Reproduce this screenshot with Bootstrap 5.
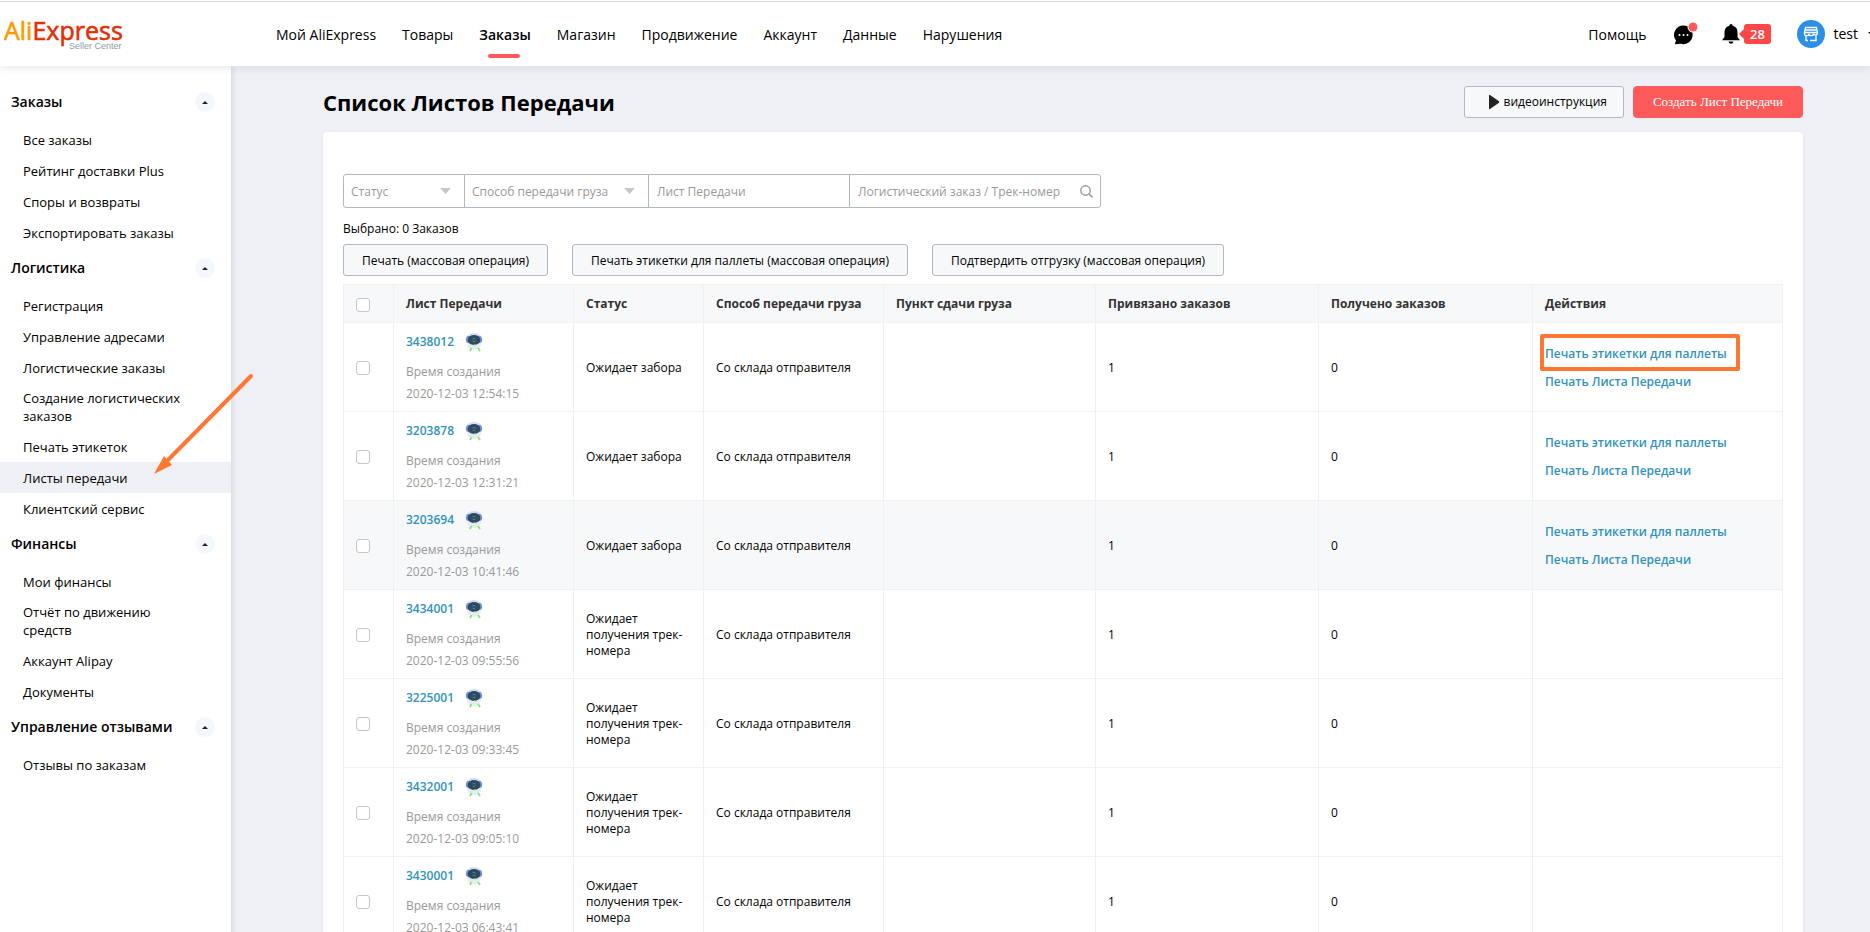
<!DOCTYPE html>
<html lang="ru">
<head>
<meta charset="utf-8">
<meta name="viewport" content="width=device-width, initial-scale=1">
<title>Список Листов Передачи</title>
<link href="https://cdn.jsdelivr.net/npm/bootstrap@5.3.0/dist/css/bootstrap.min.css" rel="stylesheet">
<style>
body{font-family:"Open Sans","Noto Sans",sans-serif;font-size:12px;line-height:16px;color:#000;background:#eff0f5;overflow-x:hidden;min-height:100vh}
a{text-decoration:none}
.topbar{height:66px;background:#fff;box-shadow:0 2px 8px rgba(31,39,130,.1);position:relative;z-index:3}
.topbar::before{content:"";position:absolute;left:0;right:0;top:1px;height:1px;background:#dadce0}
.brandmark{width:276px;padding-left:4px;flex:none}
.brandmark svg{display:block}
.mainnav{gap:26px;font-size:14px}
.mainnav a,.tools a{color:#000;line-height:20px;padding:25px 0 21px}
.mainnav a.active{font-weight:600;position:relative}
.mainnav a.active::after{content:"";position:absolute;left:9px;width:32px;bottom:8px;height:4px;border-radius:2px;background:#ff5a5a}
.tools{font-size:14px;margin-right:-6px}
.iconbtn{border:0;background:none;padding:2px 0 0;display:flex;align-items:center}
.iconbtn svg{display:block;flex:none}
.account{margin-left:26px}
.count{position:relative;background:#ff4747;color:#fff;font-weight:600;font-size:13px;line-height:20px;width:27px;padding-right:1px;border-radius:3px;margin-left:4px;text-align:center}
.count::before{content:"";position:absolute;left:-5px;top:4px;border:6px solid transparent;border-right-color:#ff4747;border-left:0}
.sidebar{width:231px;flex:none;background:#fff;padding-top:16px;box-shadow:1px 0 6px rgba(31,39,80,.14)}
.sidehead{display:flex;justify-content:space-between;align-items:center;padding:10px 16px 12px 11px;font-size:14px;line-height:20px;font-weight:600}
.toggler{width:20px;height:20px;border:0;border-radius:50%;background:#f4f8fe;padding:0;display:flex;align-items:center;justify-content:center}
.toggler::before{content:"";border:3px solid transparent;border-bottom-color:#222;border-top:0}
.caret{border:4px solid transparent;border-top-color:#000;border-bottom:0;margin-left:10px}
.sideitem{display:block;font-size:13px;line-height:18px;padding:7px 40px 6px 23px;color:#000}
.sideitem.two{padding:6px 40px 6px 23px}
.sideitem.active{background:#eff0f5}
.content{padding:20px 67px 0 92px;min-width:0}
h1{font-size:22px;line-height:32px;font-weight:700;margin:0}
.btn{--bs-btn-border-radius:3px;--bs-btn-font-size:12px;height:32px;padding:1px 18px 0;line-height:16px}
.btn-plain{--bs-btn-color:#000;--bs-btn-bg:#f7f8fa;--bs-btn-border-color:#b1b9c3;--bs-btn-hover-bg:#eceff3}
.btn-video{padding:0 16px 0 23px;margin-right:1px}
.btn-create{--bs-btn-color:#fff;--bs-btn-bg:#ff5a5a;--bs-btn-border-color:#ff5a5a;--bs-btn-hover-bg:#f04848;--bs-btn-hover-color:#fff;--bs-btn-font-size:13px;font-family:"Liberation Serif",serif;padding:0 19px;--bs-btn-border-radius:4px}
.panel{background:#fff;border-radius:4px;padding:42px 20px 0;margin-top:14px;box-shadow:0 1px 4px rgba(31,39,80,.05)}
.filters>*{height:34px;border:1px solid #b1b7c3;margin-right:-1px;position:relative;background:#fff}
.filters>:first-child{border-radius:3px 0 0 3px}
.filters>:last-child{border-radius:0 3px 3px 0;margin-right:0}
.filters select,.filters input{width:100%;height:32px;border:0;background:none;padding:0 8px;font-size:12px;color:#999;appearance:none;outline:0}
.filters select{padding:2px 7px 0}
.filters input::placeholder{color:#999;opacity:1}
.filters svg{position:absolute;top:10px;right:7px;pointer-events:none}
.filters .arrow{top:13px;right:13px}
.w-state{width:122px}.w-way{width:185px}.w-sheet{width:202px}.w-track{width:252px}
.picked{margin-top:13px;margin-bottom:7px}
.sheets{table-layout:fixed;width:100%;margin:8px 0 0;border-collapse:collapse}
.sheets th,.sheets td{border:1px solid #f0f1f2;padding:0 12px;vertical-align:middle}
.sheets th{height:38px;background:#f7f8fa;color:#333;font-weight:700}
.sheets td{height:89px;padding-top:2px}
.sheets tr.hovered td{background:#f7f8fa}
.sheets input{appearance:none;width:14px;height:14px;border:1px solid #c4c6cf;border-radius:3px;background:#fff;display:block;margin:0}
.sheets th input{margin-top:2px}
.sheets a{color:#3193bd;font-weight:600}
.idline{display:flex;align-items:center;gap:11px;height:22px;margin-bottom:8px}
.muted{color:#999;line-height:22px}
.acts a{display:block;width:max-content;line-height:28px;position:relative}
.acts a.marked::after{content:"";position:absolute;inset:-6px -13px -3px -5px;border:4px solid #ff7733;border-radius:2px}
.pointer{position:absolute;left:153px;top:372px;z-index:4;pointer-events:none}
</style>
</head>
<body>
<svg width="0" height="0" class="position-absolute" aria-hidden="true">
  <symbol id="robot" viewBox="0 0 18 19">
    <ellipse cx="9" cy="10.500" rx="7" ry="6.500" fill="#e6eaf3"/>
    <ellipse cx="9" cy="6" rx="8.200" ry="6" fill="#cfdcf4"/>
    <path d="M2.500 3 Q-0.300 6 1.500 9.500 L5 10 V3 Z M15.500 3 Q18.300 6 16.500 9.500 L13 10 V3 Z" fill="#6c97e6"/>
    <ellipse cx="9" cy="7" rx="6.400" ry="5" fill="#34495e"/>
    <path d="M7.500 6 q1.500 -1.200 3 0 M7.600 8 q1.400 1.200 2.800 0" fill="none" stroke="#27998f" stroke-width="1"/>
    <path d="M9 11 h1.500 v1.200 h-1.500z" fill="#5cd65c"/>
    <path d="M6.500 15 L5 18 M13 15 L15 18" stroke="#7dee6a" stroke-width="1.800"/>
  </symbol>
</svg>
<header class="topbar d-flex align-items-center">
  <a href="#" class="brandmark" aria-label="AliExpress Seller Center">
    <svg width="124" height="40" viewBox="0 0 124 40"><text x="0" y="27" font-family="Open Sans" font-size="25" fill="#f90" stroke="#f90" stroke-width=".6">Ali<tspan fill="#e62e04" stroke="#e62e04">Express</tspan></text><text x="65" y="36" font-family="Liberation Sans" font-size="9" fill="#8f9bad">Seller Center</text></svg>
  </a>
  <nav class="mainnav d-flex">
    <a href="#">Мой AliExpress</a><a href="#">Товары</a><a href="#" class="active">Заказы</a><a href="#">Магазин</a><a href="#">Продвижение</a><a href="#">Аккаунт</a><a href="#">Данные</a><a href="#">Нарушения</a>
  </nav>
  <div class="tools d-flex align-items-center ms-auto">
    <a href="#">Помощь</a>
    <button class="iconbtn ms-4 ps-1" aria-label="Сообщения">
      <svg width="24" height="26" viewBox="0 0 24 26"><path d="M9.500 4.500 a9.300 9.300 0 1 1 -2.500 18.300 L0.800 23.200 L2 19.500 A9.300 9.300 0 0 1 9.500 4.500z" fill="#000"/><g fill="#fff"><circle cx="5.500" cy="14" r="1"/><circle cx="9.500" cy="14" r="1"/><circle cx="13.500" cy="14" r="1"/></g><circle cx="19" cy="6" r="5.500" fill="#fff"/><circle cx="19" cy="6" r="4.500" fill="#ff5a5a"/></svg>
    </button>
    <button class="iconbtn ms-4" aria-label="Уведомления">
      <svg width="18" height="20" viewBox="0 0 18 20"><path d="M9 0 q1.500 0 1.800 1.700 Q15.500 3 15.500 8.500 V13 L18 16.300 H0 L2.500 13 V8.500 Q2.500 3 7.200 1.700 Q7.500 0 9 0z M6.500 17.500 h5 q-0.500 2.200 -2.500 2.200 t-2.500 -2.200z" fill="#000"/></svg>
      <span class="count">28</span>
    </button>
    <button class="iconbtn account" aria-label="Магазин test">
      <svg width="28" height="28" viewBox="0 0 28 28"><circle cx="14" cy="14" r="14" fill="#2b8fe8"/><g fill="none" stroke="#fff" stroke-width="1.300"><path d="M8.500 7.500 H19.500 L20.500 12.500 H7.500 Z M8.500 10 H19.500"/><path d="M7.500 12.500 v1 a2.200 2.200 0 0 0 4.400 0 a2.200 2.200 0 0 0 4.400 0 a2.200 2.200 0 0 0 4.200 0 v-1"/><path d="M9 15.500 V20.500 H11 M13 20.500 H19 V15.500"/></g></svg>
      <span class="ms-2">test</span><span class="caret"></span>
    </button>
  </div>
</header>
<div class="d-flex align-items-stretch">
<aside class="sidebar">
  <div class="sidehead">Заказы<button class="toggler" aria-label="Свернуть"></button></div>
  <a href="#" class="sideitem">Все заказы</a>
  <a href="#" class="sideitem">Рейтинг доставки Plus</a>
  <a href="#" class="sideitem">Споры и возвраты</a>
  <a href="#" class="sideitem">Экспортировать заказы</a>
  <div class="sidehead">Логистика<button class="toggler" aria-label="Свернуть"></button></div>
  <a href="#" class="sideitem">Регистрация</a>
  <a href="#" class="sideitem">Управление адресами</a>
  <a href="#" class="sideitem">Логистические заказы</a>
  <a href="#" class="sideitem two">Создание логистических заказов</a>
  <a href="#" class="sideitem">Печать этикеток</a>
  <a href="#" class="sideitem active">Листы передачи</a>
  <a href="#" class="sideitem">Клиентский сервис</a>
  <div class="sidehead">Финансы<button class="toggler" aria-label="Свернуть"></button></div>
  <a href="#" class="sideitem">Мои финансы</a>
  <a href="#" class="sideitem two">Отчёт по движению средств</a>
  <a href="#" class="sideitem">Аккаунт Alipay</a>
  <a href="#" class="sideitem">Документы</a>
  <div class="sidehead">Управление отзывами<button class="toggler" aria-label="Свернуть"></button></div>
  <a href="#" class="sideitem">Отзывы по заказам</a>
</aside>
<main class="content flex-grow-1">
  <div class="d-flex justify-content-between align-items-start">
    <h1>Список Листов Передачи</h1>
    <div class="d-flex gap-2">
      <button class="btn btn-plain btn-video d-flex align-items-center gap-1"><svg width="12" height="16" viewBox="0 0 12 16"><path d="M1 1.500 Q1 0.500 2 1 L11 7.300 Q11.600 8 11 8.700 L2 15 Q1 15.500 1 14.500z" fill="#222"/></svg>видеоинструкция</button>
      <button class="btn btn-create">Создать Лист Передачи</button>
    </div>
  </div>
  <section class="panel">
    <div class="filters d-flex">
      <div class="w-state"><select aria-label="Статус"><option>Статус</option></select><svg class="arrow" width="11" height="6" viewBox="0 0 11 6"><path d="M0 0h11L5.500 6z" fill="#c4c6cb"/></svg></div>
      <div class="w-way"><select aria-label="Способ передачи груза"><option>Способ передачи груза</option></select><svg class="arrow" width="11" height="6" viewBox="0 0 11 6"><path d="M0 0h11L5.500 6z" fill="#c4c6cb"/></svg></div>
      <div class="w-sheet"><input type="text" placeholder="Лист Передачи" aria-label="Лист Передачи"></div>
      <div class="w-track"><input type="text" placeholder="Логистический заказ / Трек-номер" aria-label="Логистический заказ / Трек-номер"><svg width="13" height="13" viewBox="0 0 13 13"><circle cx="5.500" cy="5.500" r="4.700" fill="none" stroke="#999" stroke-width="1.400"/><path d="M9 9l3.500 3.500" stroke="#999" stroke-width="1.600"/></svg></div>
    </div>
    <div class="picked">Выбрано: 0 Заказов</div>
    <div class="d-flex gap-4">
      <button class="btn btn-plain">Печать (массовая операция)</button>
      <button class="btn btn-plain">Печать этикетки для паллеты (массовая операция)</button>
      <button class="btn btn-plain">Подтвердить отгрузку (массовая операция)</button>
    </div>
    <table class="sheets">
      <colgroup><col style="width:50px"><col style="width:180px"><col style="width:130px"><col style="width:180px"><col style="width:212px"><col style="width:223px"><col style="width:214px"><col></colgroup>
      <thead><tr><th><input type="checkbox" aria-label="Выбрать все"></th><th>Лист Передачи</th><th>Статус</th><th>Способ передачи груза</th><th>Пункт сдачи груза</th><th>Привязано заказов</th><th>Получено заказов</th><th>Действия</th></tr></thead>
      <tbody>
      <tr><td><input type="checkbox" aria-label="3438012"></td><td><div class="idline"><a href="#">3438012</a><svg width="18" height="19"><use href="#robot"/></svg></div><div class="muted">Время создания<br>2020-12-03 12:54:15</div></td><td>Ожидает забора</td><td>Со склада отправителя</td><td></td><td>1</td><td>0</td><td class="acts"><a href="#" class="marked">Печать этикетки для паллеты</a><a href="#">Печать Листа Передачи</a></td></tr>
      <tr><td><input type="checkbox" aria-label="3203878"></td><td><div class="idline"><a href="#">3203878</a><svg width="18" height="19"><use href="#robot"/></svg></div><div class="muted">Время создания<br>2020-12-03 12:31:21</div></td><td>Ожидает забора</td><td>Со склада отправителя</td><td></td><td>1</td><td>0</td><td class="acts"><a href="#">Печать этикетки для паллеты</a><a href="#">Печать Листа Передачи</a></td></tr>
      <tr class="hovered"><td><input type="checkbox" aria-label="3203694"></td><td><div class="idline"><a href="#">3203694</a><svg width="18" height="19"><use href="#robot"/></svg></div><div class="muted">Время создания<br>2020-12-03 10:41:46</div></td><td>Ожидает забора</td><td>Со склада отправителя</td><td></td><td>1</td><td>0</td><td class="acts"><a href="#">Печать этикетки для паллеты</a><a href="#">Печать Листа Передачи</a></td></tr>
      <tr><td><input type="checkbox" aria-label="3434001"></td><td><div class="idline"><a href="#">3434001</a><svg width="18" height="19"><use href="#robot"/></svg></div><div class="muted">Время создания<br>2020-12-03 09:55:56</div></td><td>Ожидает получения трек-номера</td><td>Со склада отправителя</td><td></td><td>1</td><td>0</td><td></td></tr>
      <tr><td><input type="checkbox" aria-label="3225001"></td><td><div class="idline"><a href="#">3225001</a><svg width="18" height="19"><use href="#robot"/></svg></div><div class="muted">Время создания<br>2020-12-03 09:33:45</div></td><td>Ожидает получения трек-номера</td><td>Со склада отправителя</td><td></td><td>1</td><td>0</td><td></td></tr>
      <tr><td><input type="checkbox" aria-label="3432001"></td><td><div class="idline"><a href="#">3432001</a><svg width="18" height="19"><use href="#robot"/></svg></div><div class="muted">Время создания<br>2020-12-03 09:05:10</div></td><td>Ожидает получения трек-номера</td><td>Со склада отправителя</td><td></td><td>1</td><td>0</td><td></td></tr>
      <tr><td><input type="checkbox" aria-label="3430001"></td><td><div class="idline"><a href="#">3430001</a><svg width="18" height="19"><use href="#robot"/></svg></div><div class="muted">Время создания<br>2020-12-03 06:43:41</div></td><td>Ожидает получения трек-номера</td><td>Со склада отправителя</td><td></td><td>1</td><td>0</td><td></td></tr>
      </tbody>
    </table>
  </section>
</main>
</div>
<svg class="pointer" width="102" height="104" viewBox="0 0 102 104" aria-hidden="true"><path d="M98 4L14 89" stroke="#ff7733" stroke-width="4" stroke-linecap="round"/><path d="M1 102L11 84L19 93z" fill="#ff7733"/></svg>
<script src="https://cdn.jsdelivr.net/npm/bootstrap@5.3.0/dist/js/bootstrap.bundle.min.js"></script>
</body>
</html>
